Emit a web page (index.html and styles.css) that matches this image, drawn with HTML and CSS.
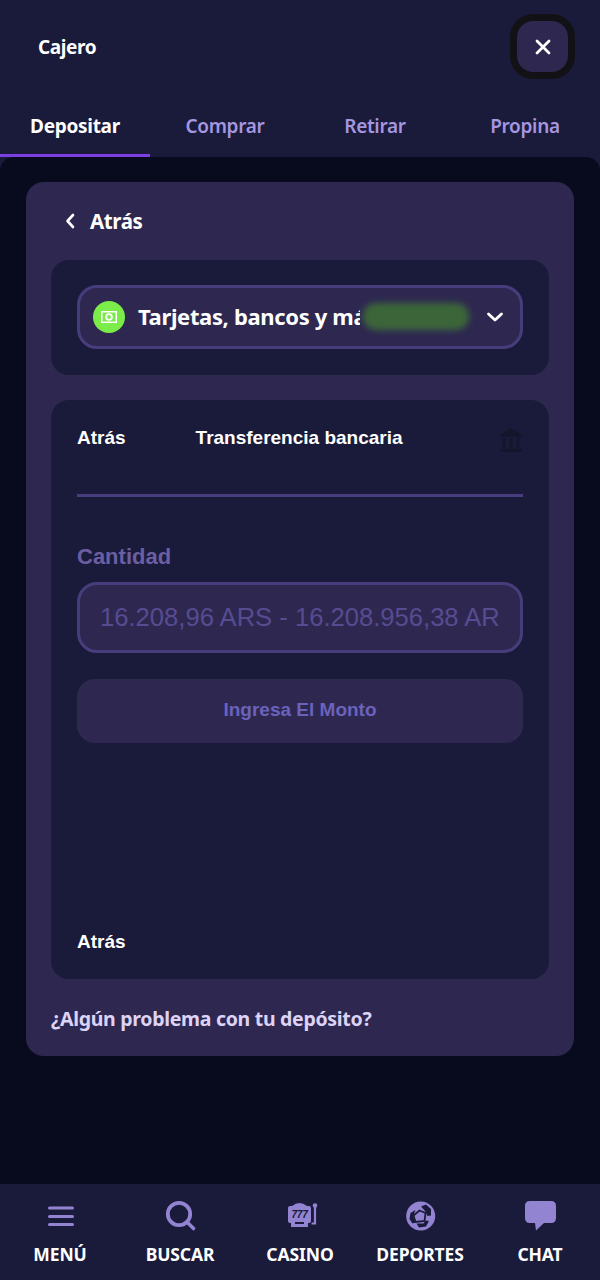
FILE: index.html
```html
<!DOCTYPE html>
<html lang="es">
<head>
    <meta charset="UTF-8">
    <meta name="viewport" content="width=device-width, initial-scale=1.0">
    <title>Cajero</title>
    <link rel="stylesheet" href="styles.css">
</head>
<body>
    <div class="top">
        <div class="title-row">
            <span class="title">Cajero</span>
            <button class="close">
                <svg width="16" height="16" viewBox="0 0 16 16"><path d="M2 2 L14 14 M14 2 L2 14" stroke="#fff" stroke-width="2.8" stroke-linecap="round"/></svg>
            </button>
        </div>
        <div class="tabs">
            <div class="tab active">Depositar</div>
            <div class="tab">Comprar</div>
            <div class="tab">Retirar</div>
            <div class="tab">Propina</div>
        </div>
    </div>

    <div class="main">
        <div class="card">
            <div class="back">
                <svg width="10" height="16" viewBox="0 0 10 16"><path d="M8 2 L2.5 8 L8 14" fill="none" stroke="#fff" stroke-width="2.6" stroke-linecap="round" stroke-linejoin="round"/></svg>
                <span>Atrás</span>
            </div>

            <div class="box box-select">
                <div class="select">
                    <span class="method-icon">
                        <svg width="16" height="12" viewBox="0 0 16 12"><rect width="16" height="12" fill="#fff"/><rect x="1.5" y="1.5" width="13" height="9" fill="#7cec4b"/><circle cx="8" cy="6" r="3.8" fill="#fff"/><circle cx="8" cy="6" r="1.9" fill="#7cec4b"/></svg>
                    </span>
                    <span class="method-name">Tarjetas, bancos y más</span>
                    <span class="cover"><span class="blur-spot"></span></span>
                    <svg class="chev" width="18" height="12" viewBox="0 0 18 12"><path d="M2.5 3 L9 9 L15.5 3" fill="none" stroke="#fff" stroke-width="2.8" stroke-linecap="round" stroke-linejoin="round"/></svg>
                </div>
            </div>

            <div class="box box-form">
                <div class="form-head">
                    <span class="plain-label">Atrás</span>
                    <span class="plain-label method-title">Transferencia bancaria</span>
                    <svg class="bank" width="24" height="26" viewBox="0 0 22 24"><path d="M11 1 L21 7 V9 H1 V7 Z M3 10 H6 V19 H3 Z M9.5 10 H12.5 V19 H9.5 Z M16 10 H19 V19 H16 Z M1 20 H21 V23 H1 Z" fill="#15152c"/></svg>
                </div>
                <div class="divider"></div>
                <div class="amount-label">Cantidad</div>
                <input class="amount-input" placeholder="16.208,96 ARS - 16.208.956,38 ARS">
                <div class="amount-btn">Ingresa El Monto</div>
                <div class="spacer"></div>
                <span class="plain-label">Atrás</span>
            </div>

            <div class="problem">¿Algún problema con tu depósito?</div>
        </div>
    </div>

    <div class="nav">
        <div class="nav-item">
            <svg width="36" height="36" viewBox="0 0 36 36"><path d="M7.5 10 H30.5 M7.5 18.5 H30.5 M7.5 26.5 H30.5" stroke="#9384d1" stroke-width="3" stroke-linecap="round"/></svg>
            <span>MENÚ</span>
        </div>
        <div class="nav-item">
            <svg width="36" height="36" viewBox="0 0 36 36"><circle cx="17" cy="16" r="11.2" fill="none" stroke="#9384d1" stroke-width="3.8"/><path d="M25.5 24.5 L31.5 30.5" stroke="#9384d1" stroke-width="3.6" stroke-linecap="round"/></svg>
            <span>BUSCAR</span>
        </div>
        <div class="nav-item">
            <svg width="36" height="36" viewBox="0 0 36 36"><path d="M10 8 Q17.5 2 25 8 H27 Q29 8 29 10 V23 Q29 25 27 25 H26 V29 H9 V25 H8 Q6 25 6 23 V10 Q6 8 8 8 Z" fill="#9384d1"/><text class="slot-text" x="17.5" y="19.5" text-anchor="middle">777</text><rect x="13" y="24" width="9" height="2" fill="#1a1b3a"/><path d="M29.5 25.5 H33 V9" fill="none" stroke="#9384d1" stroke-width="2.2"/><circle cx="33" cy="7.5" r="2.3" fill="#9384d1"/></svg>
            <span>CASINO</span>
        </div>
        <div class="nav-item">
            <svg width="36" height="36" viewBox="0 0 36 36"><circle cx="18.7" cy="18" r="14.5" fill="#9384d1"/><path d="M19 8.5 L24 6.5 L29 11 L29 17.5 L25.5 18 L23 13 Z M13.5 12 L8.5 15 L7.5 21 L10.5 25.5 L13.5 24.5 L11 18.5 Z M14.5 25.5 L17 29.5 L24 28.5 L27 23 L23.5 22.5 L21.5 25.5 Z" fill="#1a1b3a"/><path d="M17.5 12.5 L23.5 15 L22.5 23 L13.5 24 L11.5 17.5 Z" fill="none" stroke="#1a1b3a" stroke-width="1.8"/></svg>
            <span>DEPORTES</span>
        </div>
        <div class="nav-item">
            <svg width="36" height="36" viewBox="0 0 36 36"><path d="M8 3 H29 Q34 3 34 8 V20 Q34 25 29 25 H22 L14 32.5 L13 25 H8 Q3 25 3 20 V8 Q3 3 8 3 Z" fill="#9384d1"/></svg>
            <span>CHAT</span>
        </div>
    </div>
</body>
</html>
```

FILE: styles.css
```css
* {
    box-sizing: border-box;
}
html, body {
    margin: 0;
    height: 100%;
}
body {
    width: 600px;
    height: 1280px;
    display: flex;
    flex-direction: column;
    overflow: hidden;
    background-color: #1a1b3a;
    font-family: "Noto Sans", "Open Sans", sans-serif;
    color: #fff;
}

/* cabecera */
.top {
    height: 157px;
}
.title-row {
    height: 96px;
    padding: 21px 32px 0 38px;
    display: flex;
    justify-content: space-between;
    align-items: flex-start;
}
.title {
    margin-top: 12px;
    font-size: 19px;
    line-height: 28px;
    font-weight: 700;
    letter-spacing: -0.4px;
}
.close {
    width: 51px;
    height: 51px;
    padding: 0;
    display: flex;
    align-items: center;
    justify-content: center;
    background-color: #2e2850;
    border: none;
    border-radius: 16px;
    outline: 7px solid #121216;
}
.tabs {
    display: flex;
    height: 61px;
}
.tab {
    flex: 1;
    padding-top: 16px;
    text-align: center;
    font-size: 19px;
    line-height: 28px;
    font-weight: 600;
    letter-spacing: -0.3px;
    color: #a596e0;
}
.tab.active {
    color: #fff;
    font-weight: 700;
    border-bottom: 3px solid #7b3fe4;
}

/* contenido */
.main {
    flex: 1;
    padding: 25px 26px 0;
    background-color: #080b1e;
    border-radius: 14px 14px 0 0;
}
.card {
    height: 874px;
    padding: 0 25px;
    background-color: #2e2850;
    border-radius: 18px;
}
.back {
    height: 78px;
    padding-left: 14px;
    display: flex;
    align-items: center;
    gap: 15px;
    font-size: 20.5px;
    font-weight: 700;
    letter-spacing: -0.4px;
}
.box {
    background-color: #1a1b3a;
    border-radius: 18px;
    padding: 0 26px;
}
.box-select {
    height: 115px;
    padding-top: 25px;
    margin-bottom: 25px;
}
.select {
    position: relative;
    height: 64px;
    padding: 0 16px 0 13px;
    display: flex;
    align-items: center;
    background-color: #2e2850;
    border: 3px solid #483d7c;
    border-radius: 20px;
}
.method-icon {
    width: 32px;
    height: 32px;
    flex: none;
    display: flex;
    align-items: center;
    justify-content: center;
    background-color: #7cec4b;
    border-radius: 50%;
}
.method-name {
    margin-left: 13px;
    padding-bottom: 2px;
    white-space: nowrap;
    font-size: 22px;
    font-weight: 700;
    letter-spacing: -0.35px;
}
/* tapa el final del texto, como en la captura */
.cover {
    position: absolute;
    left: 280px;
    top: 8px;
    width: 115px;
    height: 42px;
    padding: 7px 0 0 3px;
    background-color: #2e2850;
}
.blur-spot {
    display: block;
    width: 106px;
    height: 27px;
    background-color: #3c6639;
    border-radius: 13px;
    filter: blur(3px);
}
.chev {
    margin-left: auto;
}
.box-form {
    height: 579px;
    padding-top: 26px;
    padding-bottom: 25px;
    display: flex;
    flex-direction: column;
}
.form-head {
    display: flex;
    align-items: center;
    height: 24px;
}
.plain-label {
    font-family: "Liberation Sans", Arial, sans-serif;
    font-size: 19px;
    font-weight: 700;
    line-height: 24px;
}
.method-title {
    margin-left: 70px;
}
.bank {
    margin-left: auto;
    margin-top: 4px;
}
.divider {
    height: 3px;
    margin-top: 44px;
    background-color: #483d7c;
}
.amount-label {
    margin-top: 48px;
    font-family: "Liberation Sans", Arial, sans-serif;
    font-size: 22px;
    font-weight: 700;
    line-height: 24px;
    color: #6b5fa3;
}
.amount-input {
    display: block;
    width: 100%;
    height: 71px;
    margin-top: 13px;
    padding: 0 20px;
    background-color: #2e2850;
    border: 3px solid #483d7c;
    border-radius: 20px;
    font-family: "Liberation Sans", Arial, sans-serif;
    font-size: 25.6px;
}
.amount-input::placeholder {
    color: #574b91;
    opacity: 1;
}
.amount-btn {
    height: 64px;
    margin-top: 26px;
    background-color: #2e2850;
    border-radius: 18px;
    text-align: center;
    font-family: "Liberation Sans", Arial, sans-serif;
    font-size: 19px;
    font-weight: 700;
    line-height: 62px;
    color: #6a62bc;
}
.spacer {
    flex: 1;
}
.problem {
    margin-top: 26px;
    font-size: 19.5px;
    font-weight: 700;
    line-height: 28px;
    letter-spacing: -0.3px;
    color: #dcd3f7;
}

/* barra inferior */
.nav {
    height: 96px;
    display: flex;
    background-color: #1a1b3a;
}
.nav-item {
    flex: 1;
    padding-top: 14px;
    display: flex;
    flex-direction: column;
    align-items: center;
    font-size: 17.5px;
    font-weight: 700;
    line-height: 22px;
    letter-spacing: -0.1px;
}
.nav-item span {
    margin-top: 9px;
}
.slot-text {
    font-family: "Liberation Sans", Arial, sans-serif;
    font-weight: 700;
    font-style: italic;
    font-size: 10px;
    letter-spacing: -0.2px;
    fill: #1a1b3a;
}
```
